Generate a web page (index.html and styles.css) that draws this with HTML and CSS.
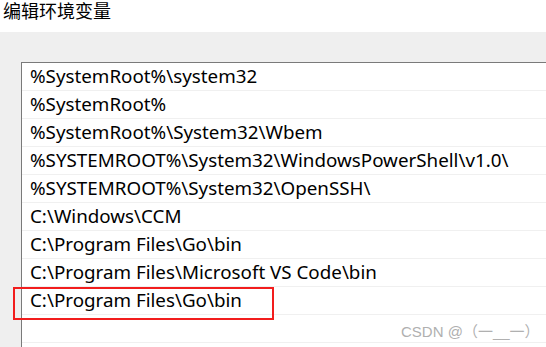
FILE: index.html
```html
<!DOCTYPE html>
<html lang="zh-CN">
<head>
    <meta charset="UTF-8">
    <title>编辑环境变量</title>
    <link rel="stylesheet" href="styles.css">
</head>
<body>
    <div class="title">编辑环境变量</div>
    <div class="panel">
        <ul class="path-list">
            <li>%SystemRoot%\system32</li>
            <li>%SystemRoot%</li>
            <li>%SystemRoot%\System32\Wbem</li>
            <li>%SYSTEMROOT%\System32\WindowsPowerShell\v1.0\</li>
            <li>%SYSTEMROOT%\System32\OpenSSH\</li>
            <li>C:\Windows\CCM</li>
            <li>C:\Program Files\Go\bin</li>
            <li>C:\Program Files\Microsoft VS Code\bin</li>
            <li>C:\Program Files\Go\bin</li>
            <li></li>
            <li></li>
        </ul>
        <!-- 标注新加的路径 -->
        <div class="highlight"></div>
        <div class="watermark">CSDN @（一__一）</div>
    </div>
</body>
</html>
```
FILE: styles.css
```css
* {
    margin: 0;
    padding: 0;
    box-sizing: border-box;
}

body {
    font-family: "Noto Sans", "Noto Sans CJK SC", sans-serif;
    background-color: #fff;
    width: 546px;
    height: 347px;
    overflow: hidden;
}

.title {
    height: 32px;
    padding-left: 3px;
    font-size: 18px;
    line-height: 22px;
    color: #000;
}

.panel {
    position: relative;
    background-color: #efefef;
    padding: 30px 0 0 21px;
    height: 315px;
    overflow: hidden;
}

.path-list {
    list-style: none;
    background-color: #fff;
    border-top: 1px solid #7a7a7a;
    border-left: 1px solid #7a7a7a;
    width: 525px;
    height: 285px;
    overflow: hidden;
}

.path-list li {
    height: 28px;
    padding-left: 8px;
    font-size: 18.8px;
    line-height: 27px;
    border-bottom: 1px solid #f0f0f0;
    color: #000;
    white-space: nowrap;
}

.highlight {
    position: absolute;
    left: 13px;
    top: 255px;
    width: 261px;
    height: 33px;
    border: 2px solid #f21d1d;
}

.watermark {
    position: absolute;
    left: 401px;
    top: 288px;
    font-family: "Liberation Sans", "Noto Sans CJK SC", sans-serif;
    font-size: 15px;
    color: #b0b0b0;
}
```
